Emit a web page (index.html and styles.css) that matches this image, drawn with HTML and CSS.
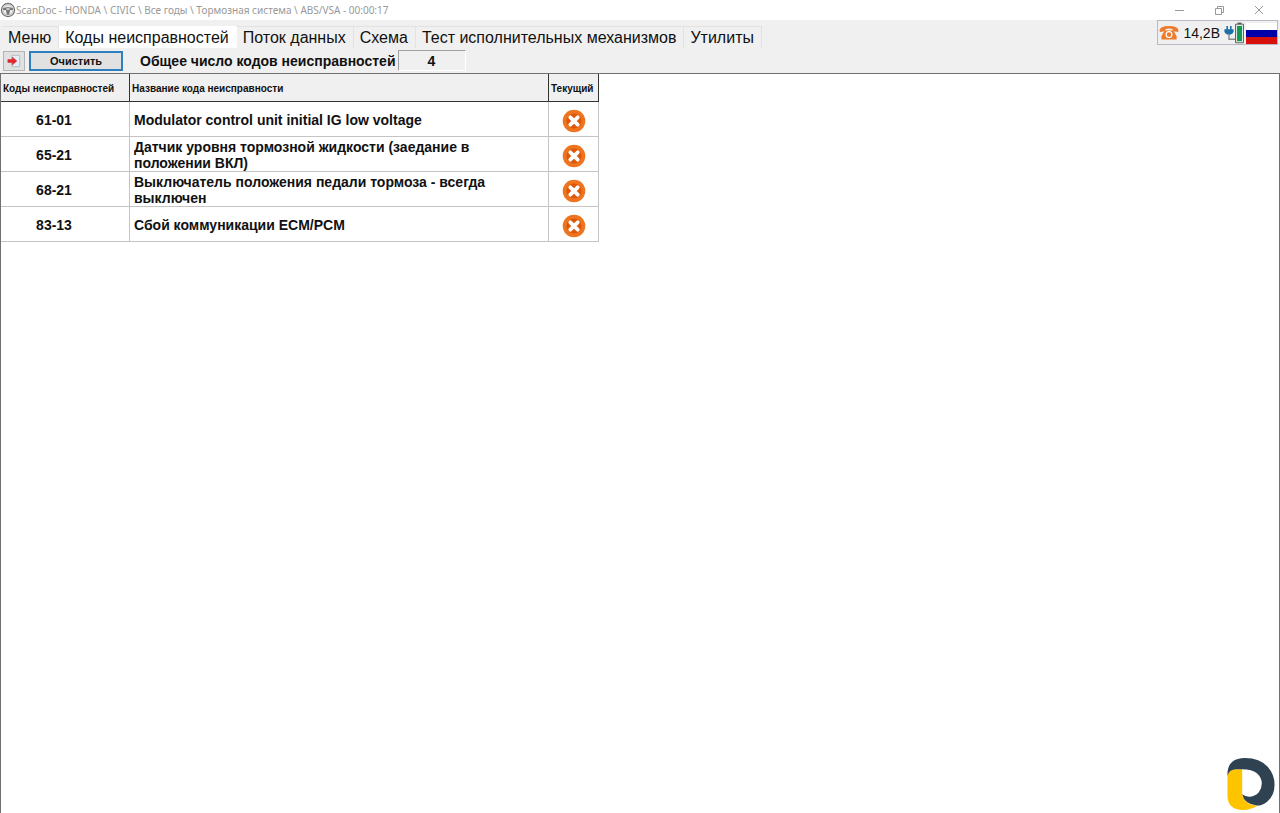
FILE: index.html
```html
<!DOCTYPE html>
<html lang="ru">
<head>
  <meta charset="UTF-8">
  <meta name="viewport" content="width=device-width, initial-scale=1.0">
  <title>ScanDoc</title>
  <link rel="stylesheet" href="styles.css">
</head>
<body>
  <!-- Shared icon -->
  <svg class="sprite" aria-hidden="true">
    <symbol id="fault" viewBox="0 0 24 24">
      <circle cx="12" cy="12" r="11.3" fill="#ee7420"/>
      <circle cx="12" cy="12" r="7.6" fill="#dc5808"/>
      <path d="M8.3 8.3l7.4 7.4M15.7 8.3l-7.4 7.4" stroke="#fff" stroke-width="3.8" stroke-linecap="round"/>
    </symbol>
  </svg>

  <!-- Title bar -->
  <header class="titlebar">
    <svg class="app-icon" viewBox="0 0 16 16" aria-hidden="true">
      <circle cx="8" cy="8" r="6.6" fill="#f4f4f4" stroke="#707070" stroke-width="1.2"/>
      <circle cx="8" cy="8" r="5" fill="none" stroke="#bbb" stroke-width="1"/>
      <path d="M2.5 6.6Q8 3.4 13.5 6.6L12.6 8L10 8.2L9.2 12.8H6.8L6 8.2L3.4 8Z" fill="#777"/>
      <path d="M6.4 6.2h3.2v1.6H6.4z" fill="#ddd"/>
    </svg>
    <span class="title">ScanDoc - HONDA \ CIVIC \ Все годы \ Тормозная система \ ABS/VSA - 00:00:17</span>
    <div class="window-buttons">
      <button type="button" aria-label="Свернуть"><svg viewBox="0 0 10 10"><path d="M1 5.5h9"/></svg></button>
      <button type="button" aria-label="Восстановить"><svg viewBox="0 0 10 10"><path d="M1.5 3.5h6v6h-6zM3.5 3.5v-2h6v6h-2"/></svg></button>
      <button type="button" aria-label="Закрыть"><svg viewBox="0 0 10 10"><path d="M1 1l8 8M9 1l-8 8"/></svg></button>
    </div>
  </header>

  <!-- Tabs and adapter status -->
  <div class="menubar">
    <nav class="tabs">
      <button class="tab" type="button">Меню</button>
      <button class="tab active" type="button">Коды неисправностей</button>
      <button class="tab" type="button">Поток данных</button>
      <button class="tab" type="button">Схема</button>
      <button class="tab" type="button">Тест исполнительных механизмов</button>
      <button class="tab" type="button">Утилиты</button>
    </nav>
    <div class="status">
      <svg class="phone" viewBox="0 0 20 16" aria-hidden="true">
        <path d="M.4 5.8Q.5 1 10 1T19.6 5.8L18.8 7L14.6 6.2L14 4.2Q10 3 6 4.2L5.4 6.2L1.2 7Z" fill="#ee7a2c"/>
        <path d="M6.4 3.8V5.4H13.6V3.8H14.8V6.2L17.6 11.2V14.6H2.4V11.2L5.2 6.2V3.8Z" fill="#ee7a2c"/>
        <circle cx="10" cy="9.6" r="2.9" fill="none" stroke="#fff" stroke-width="1.2"/>
      </svg>
      <span class="voltage">14,2В</span>
      <svg class="battery" viewBox="0 0 22 22" aria-hidden="true">
        <path d="M3.2 4v4M6.8 4v4" stroke="#1d6fa5" stroke-width="1.6"/>
        <path d="M.4 7.2h9.2v2Q9 12.5 5 12.8Q1 12.5.4 9.2Z" fill="#1d6fa5"/>
        <path d="M5 12.5v4.7h6" fill="none" stroke="#8a8a8a" stroke-width="1.4"/>
        <path d="M13.5 .6h4v2h-4z" fill="#555"/>
        <path d="M11.5 2.2h8v18.6h-8z" fill="#d8e8df" stroke="#666" stroke-width="1"/>
        <path d="M13 4h5v15.2h-5z" fill="#149a55"/>
      </svg>
      <svg class="flag" viewBox="0 0 30 21" preserveAspectRatio="none" aria-hidden="true">
        <path d="M0 0h30v7H0z" fill="#fff"/>
        <path d="M0 7h30v7H0z" fill="#0000a8"/>
        <path d="M0 14h30v7H0z" fill="#d8100c"/>
      </svg>
    </div>
  </div>

  <!-- Toolbar -->
  <div class="toolbar">
    <button class="exit" type="button" aria-label="Выход">
      <svg viewBox="0 0 16 16">
        <path d="M5.5 1.5h9v13h-9z" fill="#e4edf5" stroke="#a9bac8"/>
        <path d="M1 6.3h5V3.5L11.3 8L6 12.5V9.7H1z" fill="#e8262a" stroke="#b5353a" stroke-width=".6"/>
      </svg>
    </button>
    <button class="clear" type="button">Очистить</button>
    <label class="total" for="total">Общее число кодов неисправностей</label>
    <input class="count" id="total" type="text" value="4" readonly>
  </div>

  <!-- Fault codes -->
  <main class="panel">
    <table class="codes">
      <colgroup>
        <col class="col-code">
        <col class="col-name">
        <col class="col-current">
      </colgroup>
      <thead>
        <tr><th>Коды неисправностей</th><th>Название кода неисправности</th><th>Текущий</th></tr>
      </thead>
      <tbody>
        <tr>
          <td class="code">61-01</td>
          <td>Modulator control unit initial IG low voltage</td>
          <td class="current"><svg><use href="#fault"/></svg></td>
        </tr>
        <tr>
          <td class="code">65-21</td>
          <td>Датчик уровня тормозной жидкости (заедание в положении ВКЛ)</td>
          <td class="current"><svg><use href="#fault"/></svg></td>
        </tr>
        <tr>
          <td class="code">68-21</td>
          <td>Выключатель положения педали тормоза - всегда выключен</td>
          <td class="current"><svg><use href="#fault"/></svg></td>
        </tr>
        <tr>
          <td class="code">83-13</td>
          <td>Сбой коммуникации ECM/PCM</td>
          <td class="current"><svg><use href="#fault"/></svg></td>
        </tr>
      </tbody>
    </table>
  </main>

  <!-- Corner logo -->
  <svg class="logo" viewBox="0 0 48 53" aria-hidden="true">
    <path d="M0 18Q1 11.5 8 11.5H15V37Q17 48 31 48.5Q24 53 16 53Q0 53 0 38Z" fill="#ffc400"/>
    <path d="M0 18V15Q1 0 18 0Q33 0 41 9Q48 17 48 27Q48 38 41 44Q36 48.5 30 48.5Q17 47 15 37Q18 39.5 22 39.5Q28 39.5 32 35Q35 31 35 26Q35 20 30 15.5Q25 11.5 15 11.5H9Q2 11.5 0 18Z" fill="#2f4252"/>
  </svg>
</body>
</html>
```
FILE: styles.css
```css
:root {
  --bg: #f0f0f0;
  --line: #c4c4c4;
  --frame: #707070;
  --head-line: #333;
}
* { box-sizing: border-box; margin: 0; padding: 0; }
body { display: flex; flex-direction: column; min-height: 100vh; background: var(--bg); color: #111; font-family: "Liberation Sans", Arial, sans-serif; }
button, input { font-family: inherit; color: inherit; }
.sprite { position: absolute; width: 0; height: 0; }

.titlebar { display: flex; align-items: center; height: 20px; padding-right: 1px; background: #fff; color: #999; font-family: "Noto Sans", sans-serif; font-size: 10px; }
.app-icon { width: 16px; height: 16px; }
.title { flex: 1; white-space: nowrap; }
.window-buttons { display: flex; }
.window-buttons button { display: flex; align-items: center; justify-content: center; width: 40px; height: 20px; border: none; background: none; }
.window-buttons svg { width: 10px; height: 10px; fill: none; stroke: #999; stroke-width: 1; }

.menubar { display: flex; justify-content: space-between; height: 28px; padding: 0 2px; }
.tabs { display: flex; align-items: flex-end; }
.tab { height: 22px; padding: 0 7px 0 6px; border: 1px solid #e2e2e2; border-left: none; border-bottom: none; background: var(--bg); font-size: 16px; line-height: 21px; white-space: nowrap; }
.tab.active { background: #fff; border-color: #fff; }
.status { display: flex; align-items: center; height: 25px; padding: 1px 0 0 1px; border: 1px solid #b9b9c4; }
.phone { width: 20px; height: 16px; }
.voltage { margin: 0 4px; font-size: 14px; }
.battery { width: 22px; height: 22px; }
.flag { width: 31px; height: 21px; }

.toolbar { display: flex; align-items: center; height: 25px; padding: 0 3px; }
.exit { display: flex; align-items: center; justify-content: center; width: 22px; height: 20px; border: 1px solid #b4b4b4; background: #e1e1e1; }
.exit svg { width: 14px; height: 14px; }
.clear { width: 94px; height: 20px; margin-left: 4px; border: 2px solid #2f7fbf; background: #e1e1e1; font-size: 11px; font-weight: bold; }
.total { margin-left: 17px; font-size: 14px; font-weight: bold; white-space: nowrap; }
.count { width: 68px; height: 21px; margin-left: 2px; border: 1px solid #fff; border-top-color: #a0a0a0; border-left-color: #a0a0a0; background: var(--bg); font-size: 14px; font-weight: bold; text-align: center; }

.panel { flex: 1; border: 1px solid var(--frame); border-bottom: none; background: #fff; }
.codes { width: 598px; border-spacing: 0; table-layout: fixed; font-weight: bold; }
.col-code { width: 129px; }
.col-name { width: 419px; }
.col-current { width: 50px; }
.codes th { height: 28px; padding: 2px 2px 0; border-right: 1px solid var(--head-line); border-bottom: 1px solid var(--head-line); background: var(--bg); font-size: 10px; text-align: left; white-space: nowrap; }
.codes td { height: 35px; padding: 1px 4px 0; border-right: 1px solid var(--line); border-bottom: 1px solid var(--line); font-size: 14px; line-height: 16px; }
.codes .code { padding-right: 26px; text-align: center; }
.codes .current { padding: 4px 0 0; text-align: center; }
.current svg { display: block; width: 24px; height: 24px; margin: 0 auto; }

.logo { position: fixed; right: 5px; bottom: 3px; width: 48px; height: 52px; }
```
